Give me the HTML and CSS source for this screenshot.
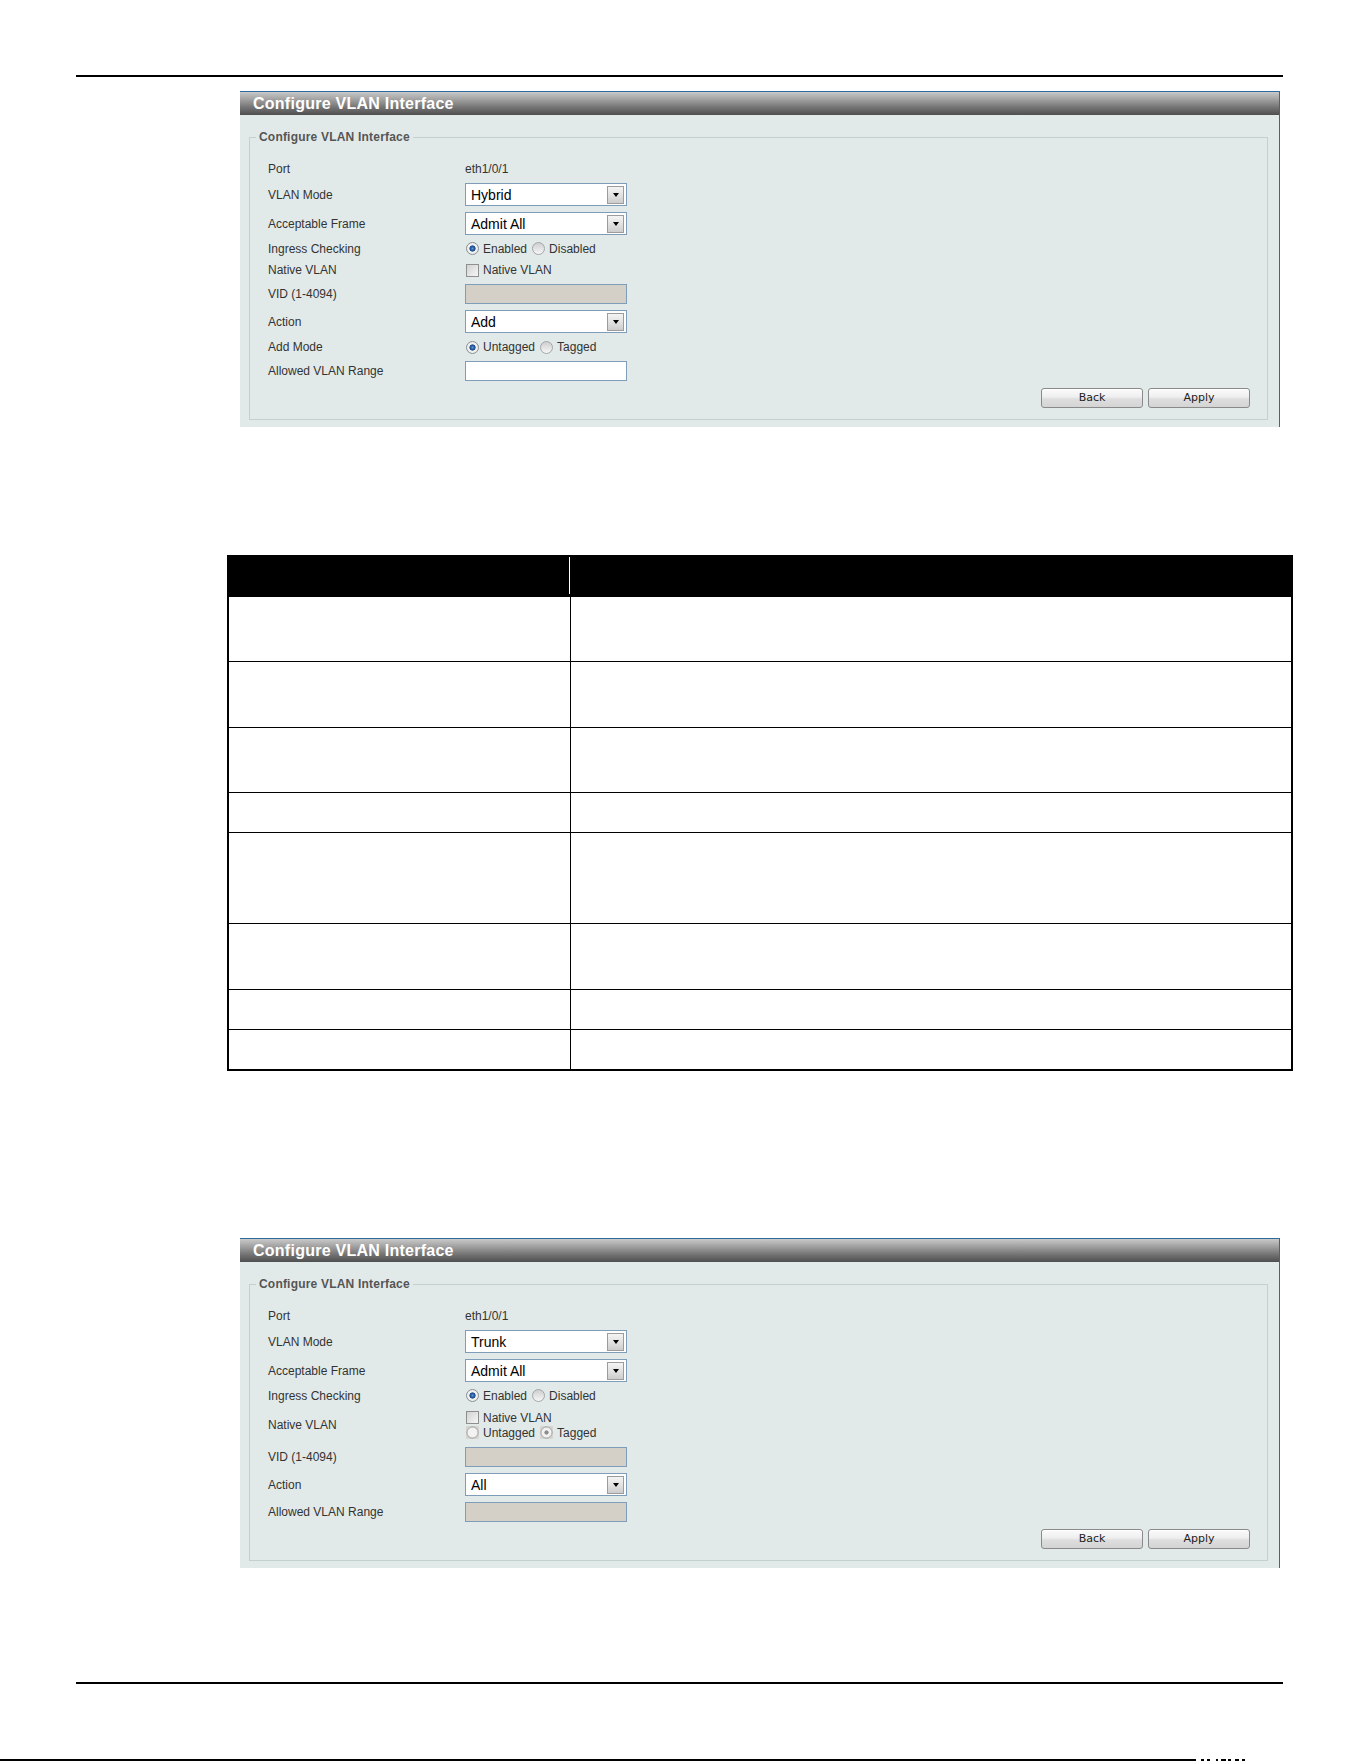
FILE: index.html
```html
<!DOCTYPE html>
<html lang="en">
<head>
<meta charset="utf-8">
<title>Configure VLAN Interface</title>
<link rel="stylesheet" href="styles.css">
</head>
<body>
<div class="page">
  <div class="rule"></div>

  <section class="panel">
    <div class="panel-title">Configure VLAN Interface</div>
    <fieldset class="fs">
      <legend class="fs-legend">Configure VLAN Interface</legend>
      <div class="fs-body">
        <div class="row h22"><div class="lbl">Port</div><div class="val">eth1/0/1</div></div>
        <div class="row h29"><div class="lbl">VLAN Mode</div><div class="val"><div class="select"><span class="sel-text">Hybrid</span><span class="sel-btn"><span class="tri"></span></span></div></div></div>
        <div class="row h29"><div class="lbl">Acceptable Frame</div><div class="val"><div class="select"><span class="sel-text">Admit All</span><span class="sel-btn"><span class="tri"></span></span></div></div></div>
        <div class="row h21"><div class="lbl">Ingress Checking</div><div class="val"><span class="radio on first"></span>Enabled<span class="radio second"></span>Disabled</div></div>
        <div class="row h22"><div class="lbl">Native VLAN</div><div class="val"><span class="check"></span>Native VLAN</div></div>
        <div class="row h26"><div class="lbl">VID (1-4094)</div><div class="val"><div class="txt dis"></div></div></div>
        <div class="row h29"><div class="lbl">Action</div><div class="val"><div class="select"><span class="sel-text">Add</span><span class="sel-btn"><span class="tri"></span></span></div></div></div>
        <div class="row h22"><div class="lbl">Add Mode</div><div class="val"><span class="radio on first"></span>Untagged<span class="radio second"></span>Tagged</div></div>
        <div class="row h26"><div class="lbl">Allowed VLAN Range</div><div class="val"><div class="txt"></div></div></div>
        <div class="actions"><button class="btn" type="button">Back</button><button class="btn" type="button">Apply</button></div>
      </div>
    </fieldset>
  </section>

  <table class="desc">
    <thead>
      <tr><th class="c1"><div class="sep"></div></th><th class="c2"></th></tr>
    </thead>
    <tbody>
      <tr><td class="c1"><div class="cell r64"></div></td><td class="c2"><div class="cell r64"></div></td></tr>
      <tr><td class="c1"><div class="cell r65"></div></td><td class="c2"><div class="cell r65"></div></td></tr>
      <tr><td class="c1"><div class="cell r64"></div></td><td class="c2"><div class="cell r64"></div></td></tr>
      <tr><td class="c1"><div class="cell r39"></div></td><td class="c2"><div class="cell r39"></div></td></tr>
      <tr><td class="c1"><div class="cell r90"></div></td><td class="c2"><div class="cell r90"></div></td></tr>
      <tr><td class="c1"><div class="cell r65"></div></td><td class="c2"><div class="cell r65"></div></td></tr>
      <tr><td class="c1"><div class="cell r39"></div></td><td class="c2"><div class="cell r39"></div></td></tr>
      <tr class="last"><td class="c1"><div class="cell r39"></div></td><td class="c2"><div class="cell r39"></div></td></tr>
    </tbody>
  </table>

  <section class="panel panel2">
    <div class="panel-title">Configure VLAN Interface</div>
    <fieldset class="fs">
      <legend class="fs-legend">Configure VLAN Interface</legend>
      <div class="fs-body">
        <div class="row h22"><div class="lbl">Port</div><div class="val">eth1/0/1</div></div>
        <div class="row h29"><div class="lbl">VLAN Mode</div><div class="val"><div class="select"><span class="sel-text">Trunk</span><span class="sel-btn"><span class="tri"></span></span></div></div></div>
        <div class="row h29"><div class="lbl">Acceptable Frame</div><div class="val"><div class="select"><span class="sel-text">Admit All</span><span class="sel-btn"><span class="tri"></span></span></div></div></div>
        <div class="row h21"><div class="lbl">Ingress Checking</div><div class="val"><span class="radio on first"></span>Enabled<span class="radio second"></span>Disabled</div></div>
        <div class="row h38"><div class="lbl">Native VLAN</div>
          <div class="val-stack">
            <div class="line"><span class="check"></span>Native VLAN</div>
            <div class="line"><span class="radio dis first"></span>Untagged<span class="radio dis on-dis second"></span>Tagged</div>
          </div>
        </div>
        <div class="row h26"><div class="lbl">VID (1-4094)</div><div class="val"><div class="txt dis"></div></div></div>
        <div class="row h29"><div class="lbl">Action</div><div class="val"><div class="select"><span class="sel-text">All</span><span class="sel-btn"><span class="tri"></span></span></div></div></div>
        <div class="row h26"><div class="lbl">Allowed VLAN Range</div><div class="val"><div class="txt dis"></div></div></div>
        <div class="actions"><button class="btn" type="button">Back</button><button class="btn" type="button">Apply</button></div>
      </div>
    </fieldset>
  </section>

  <div class="rule rule-bottom"></div>

  <div class="footline">
    <span class="seg w1196"></span><span class="gap g5"></span><span class="seg w3"></span><span class="gap g3"></span><span class="seg w3"></span><span class="gap g6"></span><span class="seg w2"></span><span class="gap g3"></span><span class="seg w5"></span><span class="gap g2"></span><span class="seg w3"></span><span class="gap g4"></span><span class="seg w4"></span><span class="gap g3"></span><span class="seg w3"></span>
  </div>
</div>
</body>
</html>
```

FILE: styles.css
```css
html, body {
  margin: 0;
  padding: 0;
  background: #ffffff;
}

body {
  font-family: "Liberation Sans", Arial, sans-serif;
  color: #333333;
}

.page {
  padding-top: 75px;
}

.rule {
  margin-left: 76px;
  width: 1207px;
  height: 2px;
  background: #000000;
}

.rule-bottom {
  margin-top: 114px;
}

/* ---------- panel ---------- */
.panel {
  margin: 14px 0 0 240px;
  width: 1039px;
  padding-bottom: 7px;
  background: #e2eae9;
  border-top: 1px solid #2e6a9e;
  border-right: 1px solid #2e6a9e;
}

.panel2 {
  margin-top: 167px;
}

.panel-title {
  height: 23px;
  line-height: 23px;
  padding-left: 13px;
  color: #ffffff;
  font-size: 16px;
  font-weight: bold;
  letter-spacing: 0.25px;
  background: linear-gradient(to bottom, #c9c9c9 0%, #a4a4a4 30%, #767676 65%, #4f4f4f 100%);
}

.fs {
  margin: 15px 11px 0 9px;
  padding: 0;
  border: 1px solid #c3d0d0;
  min-width: 0;
}

.fs-legend {
  margin-left: 6px;
  padding: 0 3px;
  font-size: 12px;
  line-height: 14px;
  font-weight: bold;
  letter-spacing: 0.2px;
  color: #555555;
}

.fs-body {
  padding: 14px 17px 11px 18px;
}

.row {
  display: flex;
  align-items: center;
  font-size: 12px;
  color: #333333;
}

.h21 { height: 21px; }
.h22 { height: 22px; }
.h26 { height: 26px; }
.h29 { height: 29px; }
.h38 { height: 38px; }

.lbl {
  width: 197px;
  flex: none;
}

.val {
  display: flex;
  align-items: center;
}

.val-stack {
  display: flex;
  flex-direction: column;
}

.line {
  height: 15px;
  display: flex;
  align-items: center;
}

/* select */
.select {
  box-sizing: border-box;
  width: 162px;
  height: 23px;
  border: 1px solid #7f9db9;
  background: #ffffff;
  display: flex;
  align-items: center;
  justify-content: space-between;
  padding: 0 2px 0 5px;
}

.sel-text {
  font-size: 14px;
  color: #000000;
  line-height: 16px;
}

.sel-btn {
  box-sizing: border-box;
  width: 17px;
  height: 18px;
  border: 1px solid #9c9c9c;
  background: linear-gradient(to bottom, #f4f4f4 0%, #e2e2e2 50%, #cdcdcd 100%);
  display: flex;
  align-items: center;
  justify-content: center;
}

.tri {
  width: 0;
  height: 0;
  border-left: 3.5px solid transparent;
  border-right: 3.5px solid transparent;
  border-top: 4px solid #000000;
}

/* text input */
.txt {
  box-sizing: border-box;
  width: 162px;
  height: 20px;
  border: 1px solid #7f9db9;
  background: #ffffff;
}

.txt.dis {
  background: #d4d0c8;
}

/* radio */
.radio {
  box-sizing: border-box;
  width: 13px;
  height: 13px;
  flex: none;
  border-radius: 50%;
  border: 1px solid #a2a6aa;
  background: linear-gradient(to bottom, #cfcfcf, #f6f6f6);
}

.radio.first {
  margin: 0 4px 0 1px;
}

.radio.second {
  margin: 0 4px 0 5px;
}

.radio.on {
  border-color: #8a9096;
  background: radial-gradient(circle, #6b9ad6 0, #2a62a8 1.5px, #1d4d8a 2.8px, #f4f4f4 3.4px, #e0e0e0 100%);
}

.radio.dis {
  border: 0;
  border-radius: 1px;
  background: radial-gradient(circle, #f2f2f2 0, #f2f2f2 4.6px, #b9b9b9 5.2px, #b9b9b9 6px, #d8d5d0 6.5px);
}

.radio.dis.on-dis {
  background: radial-gradient(circle, #8c8c8c 0, #8c8c8c 1.8px, #f2f2f2 2.4px, #f2f2f2 4.6px, #b9b9b9 5.2px, #b9b9b9 6px, #d8d5d0 6.5px);
}

/* checkbox */
.check {
  box-sizing: border-box;
  width: 13px;
  height: 13px;
  flex: none;
  margin: 0 4px 0 1px;
  border: 1px solid #8e8f8f;
  background: linear-gradient(135deg, #d2d2d2, #f6f6f6);
}

/* buttons */
.actions {
  display: flex;
  justify-content: flex-end;
  gap: 5px;
  margin-top: 4px;
}

.btn {
  box-sizing: border-box;
  width: 102px;
  height: 20px;
  margin: 0;
  padding: 0;
  border: 1px solid #8a8a8a;
  border-radius: 3px;
  background: linear-gradient(to bottom, #fbfbfb 0%, #eeeeee 45%, #dedede 55%, #d4d4d4 100%);
  box-shadow: inset 0 1px 0 #ffffff;
  font-family: "DejaVu Sans", Verdana, sans-serif;
  font-size: 11px;
  color: #222222;
  line-height: 18px;
}

/* ---------- description table ---------- */
.desc {
  margin: 128px 0 0 227px;
  width: 1066px;
  border: 2px solid #000000;
  border-spacing: 0;
  table-layout: fixed;
}

.desc th {
  background: #000000;
  height: 40px;
  padding: 0;
  vertical-align: top;
}

.desc th.c1,
.desc td.c1 {
  width: 341px;
  border-right: 1px solid #000000;
}

.sep {
  height: 37px;
  border-right: 1px solid #ffffff;
}

.desc td {
  padding: 0;
  border-bottom: 1px solid #000000;
  background: #ffffff;
}

.desc tr.last td {
  border-bottom: 0;
}

.cell { width: 100%; }
.r39 { height: 39px; }
.r64 { height: 64px; }
.r65 { height: 65px; }
.r90 { height: 90px; }

/* ---------- bottom line ---------- */
.footline {
  display: flex;
  margin-top: 75px;
  height: 2px;
}

.seg {
  height: 2px;
  background: #000000;
  flex: none;
}

.gap { flex: none; }

.w1196 { width: 1196px; }
.w2 { width: 2px; }
.w3 { width: 3px; }
.w4 { width: 4px; }
.w5 { width: 5px; }
.g2 { width: 2px; }
.g3 { width: 3px; }
.g4 { width: 4px; }
.g5 { width: 5px; }
.g6 { width: 6px; }
```
